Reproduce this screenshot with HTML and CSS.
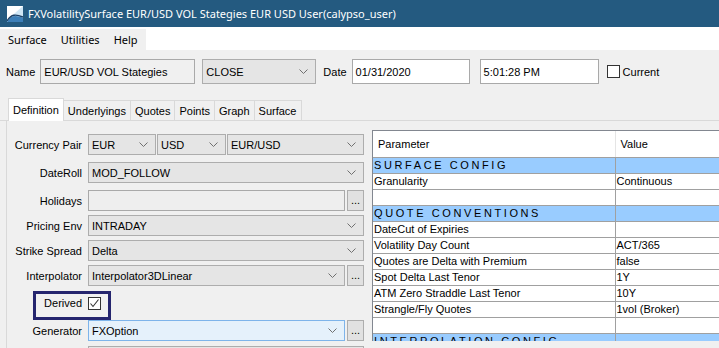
FILE: index.html
```html
<!DOCTYPE html>
<html>
<head>
<meta charset="utf-8">
<link rel="stylesheet" href="styles.css">
</head>
<body>
<div class="window">
  <div class="titlebar">
    <svg class="appicon" width="16" height="16" viewBox="0 0 16 16">
      <rect x="0" y="0" width="16" height="16" fill="#cfe6f5"/>
      <polygon points="0,0 16,0 0,14" fill="#ffffff"/>
      <path d="M0 16 C4 9 9 9 16 12 L16 16 Z" fill="#3d7fb8"/>
      <path d="M0 15 C4 8 9 8 16 11" stroke="#1b3f66" stroke-width="1.4" fill="none"/>
    </svg>
    <span class="title">FXVolatilitySurface EUR/USD VOL Stategies EUR USD User(calypso_user)</span>
  </div>
  <div class="menubar">
    <div class="menu">
      <span class="menuitem">Surface</span>
      <span class="menuitem">Utilities</span>
      <span class="menuitem">Help</span>
    </div>
  </div>
  <div class="content">
    <div class="namerow">
      <span class="lbl">Name</span>
      <div class="field disabled w-name">EUR/USD VOL Stategies</div>
      <div class="combo w-close"><span>CLOSE</span><svg class="chev" width="9" height="5" viewBox="0 0 9 5"><path d="M0.5 0.5 L4.5 4.5 L8.5 0.5" stroke="#707070" fill="none"/></svg></div>
      <span class="lbl">Date</span>
      <div class="field w-date">01/31/2020</div>
      <div class="field w-time">5:01:28 PM</div>
      <span class="checkbox"></span>
      <span class="lbl current">Current</span>
    </div>
    <div class="tabs">
      <span class="tab selected">Definition</span>
      <span class="tab">Underlyings</span>
      <span class="tab">Quotes</span>
      <span class="tab">Points</span>
      <span class="tab">Graph</span>
      <span class="tab">Surface</span>
    </div>
    <div class="panel">
      <div class="form">
        <div class="row wide">
          <span class="flabel">Currency Pair</span>
          <div class="fields">
            <div class="combo w-eur"><span>EUR</span><svg class="chev" width="9" height="5" viewBox="0 0 9 5"><path d="M0.5 0.5 L4.5 4.5 L8.5 0.5" stroke="#707070" fill="none"/></svg></div>
            <div class="combo w-usd"><span>USD</span><svg class="chev" width="9" height="5" viewBox="0 0 9 5"><path d="M0.5 0.5 L4.5 4.5 L8.5 0.5" stroke="#707070" fill="none"/></svg></div>
            <div class="combo grow"><span>EUR/USD</span><svg class="chev" width="9" height="5" viewBox="0 0 9 5"><path d="M0.5 0.5 L4.5 4.5 L8.5 0.5" stroke="#707070" fill="none"/></svg></div>
          </div>
        </div>
        <div class="row wide">
          <span class="flabel">DateRoll</span>
          <div class="fields">
            <div class="combo grow"><span>MOD_FOLLOW</span><svg class="chev" width="9" height="5" viewBox="0 0 9 5"><path d="M0.5 0.5 L4.5 4.5 L8.5 0.5" stroke="#707070" fill="none"/></svg></div>
          </div>
        </div>
        <div class="row">
          <span class="flabel">Holidays</span>
          <div class="fields">
            <div class="field grey grow"></div>
            <span class="dots">...</span>
          </div>
        </div>
        <div class="row">
          <span class="flabel">Pricing Env</span>
          <div class="fields">
            <div class="combo grow"><span>INTRADAY</span><svg class="chev" width="9" height="5" viewBox="0 0 9 5"><path d="M0.5 0.5 L4.5 4.5 L8.5 0.5" stroke="#707070" fill="none"/></svg></div>
          </div>
        </div>
        <div class="row">
          <span class="flabel">Strike Spread</span>
          <div class="fields">
            <div class="combo grow"><span>Delta</span><svg class="chev" width="9" height="5" viewBox="0 0 9 5"><path d="M0.5 0.5 L4.5 4.5 L8.5 0.5" stroke="#707070" fill="none"/></svg></div>
          </div>
        </div>
        <div class="row">
          <span class="flabel">Interpolator</span>
          <div class="fields">
            <div class="combo grow"><span>Interpolator3DLinear</span><svg class="chev" width="9" height="5" viewBox="0 0 9 5"><path d="M0.5 0.5 L4.5 4.5 L8.5 0.5" stroke="#707070" fill="none"/></svg></div>
            <span class="dots">...</span>
          </div>
        </div>
        <div class="row derived">
          <span class="flabel">Derived</span>
          <div class="fields">
            <span class="checkbox checked"><svg width="11" height="11" viewBox="0 0 11 11"><path d="M1.5 5.5 L4 8.5 L9.5 1.5" stroke="#333" stroke-width="1.1" fill="none"/></svg></span>
          </div>
          <span class="highlight"></span>
        </div>
        <div class="row">
          <span class="flabel">Generator</span>
          <div class="fields">
            <div class="combo hover grow"><span>FXOption</span><svg class="chev" width="9" height="5" viewBox="0 0 9 5"><path d="M0.5 0.5 L4.5 4.5 L8.5 0.5" stroke="#707070" fill="none"/></svg></div>
            <span class="dots">...</span>
          </div>
        </div>
        <div class="row">
          <span class="flabel"></span>
          <div class="fields">
            <div class="combo grow"></div>
          </div>
        </div>
      </div>
      <div class="gridwrap">
        <table class="grid">
          <colgroup><col class="c1"><col class="c2"></colgroup>
          <thead>
            <tr><th>Parameter</th><th>Value</th></tr>
          </thead>
          <tbody>
            <tr class="sect"><td>SURFACE CONFIG</td><td></td></tr>
            <tr><td>Granularity</td><td>Continuous</td></tr>
            <tr><td></td><td></td></tr>
            <tr class="sect"><td>QUOTE CONVENTIONS</td><td></td></tr>
            <tr><td>DateCut of Expiries</td><td></td></tr>
            <tr><td>Volatility Day Count</td><td>ACT/365</td></tr>
            <tr><td>Quotes are Delta with Premium</td><td>false</td></tr>
            <tr><td>Spot Delta Last Tenor</td><td>1Y</td></tr>
            <tr><td>ATM Zero Straddle Last Tenor</td><td>10Y</td></tr>
            <tr><td>Strangle/Fly Quotes</td><td>1vol (Broker)</td></tr>
            <tr><td></td><td></td></tr>
            <tr class="sect"><td>INTERPOLATION CONFIG</td><td></td></tr>
            <tr><td></td><td></td></tr>
          </tbody>
        </table>
      </div>
    </div>
  </div>
</div>
</body>
</html>
```

FILE: styles.css
```css
* { box-sizing: border-box; }
html, body { margin: 0; padding: 0; }
body {
  width: 719px;
  height: 348px;
  overflow: hidden;
  background: #f0f0f0;
  font-family: "Liberation Sans", Arial, sans-serif;
  font-size: 11px;
  color: #000;
}
.window { width: 719px; height: 348px; overflow: hidden; }

.titlebar {
  height: 27px;
  background: #245a80;
  display: flex;
  align-items: center;
  padding-left: 7px;
}
.appicon { flex: none; margin-right: 5px; }
.title {
  color: #fff;
  font-family: "Noto Sans", "Open Sans", sans-serif;
  font-size: 11px;
  white-space: nowrap;
}

.menubar {
  height: 23px;
  background: #fff;
  padding-top: 2px;
}
.menu {
  display: inline-flex;
  align-items: center;
  height: 21px;
  width: 146px;
  background: #f0f0f0;
  padding-left: 8px;
  gap: 14px;
  font-family: "Noto Sans", "Open Sans", sans-serif;
  font-size: 11px;
}

.content { background: #f0f0f0; }

.namerow {
  display: flex;
  align-items: center;
  height: 25px;
  margin-top: 9px;
  padding-left: 6px;
}
.lbl { white-space: nowrap; }
.namerow .lbl { margin-right: 5px; }
.field {
  height: 25px;
  border: 1px solid #a9a9a9;
  background: #fff;
  display: flex;
  align-items: center;
  padding-left: 3px;
  white-space: nowrap;
}
.field.disabled { background: #f0f0f0; }
.field.grey { background: #eeeeee; }
.w-name { width: 155px; margin-right: 7px; }
.w-close { width: 114px; margin-right: 7px; height: 25px; }
.w-date { width: 118px; margin-right: 10px; }
.w-time { width: 119px; margin-right: 8px; }
.checkbox {
  width: 13px;
  height: 13px;
  border: 1px solid #333;
  background: #fff;
  display: inline-flex;
  align-items: center;
  justify-content: center;
  flex: none;
}
.namerow .current { margin-left: 3px; }

.combo {
  height: 100%;
  background: #e5e5e5;
  border: 1px solid #adadad;
  display: flex;
  align-items: center;
  justify-content: space-between;
  padding: 0 7px 0 3px;
  white-space: nowrap;
}
.combo.hover { background: #e5f1fb; border-color: #7eb4ea; }
.chev { flex: none; }

.tabs {
  display: flex;
  align-items: flex-end;
  height: 22px;
  margin-top: 15px;
  padding-left: 8px;
  border-bottom: 1px solid #d9d9d9;
}
.tab {
  height: 20px;
  padding: 0 4px;
  border: 1px solid #d9d9d9;
  border-bottom: none;
  margin-left: -1px;
  display: flex;
  align-items: center;
  background: #f0f0f0;
  white-space: nowrap;
}
.tab.selected {
  height: 23px;
  margin-bottom: -1px;
  background: #fff;
  margin-left: 0;
  padding: 0 4px;
}

.panel {
  display: flex;
  align-items: flex-start;
  height: 230px;
  margin-left: 6px;
  border-left: 1px solid #d9d9d9;
  background: #f0f0f0;
}
.form {
  width: 357px;
  padding-top: 13px;
  flex: none;
}
.row {
  display: flex;
  height: 21px;
  margin-bottom: 4px;
}
.row.wide { margin-bottom: 7px; }
.row.derived { height: 26px; position: relative; align-items: center; margin-bottom: 4px; }
.row:nth-last-child(2) { margin-bottom: 5px; }
.flabel {
  width: 75px;
  text-align: right;
  margin-right: 6px;
  flex: none;
  align-self: center;
  white-space: nowrap;
}
.fields {
  display: flex;
  flex: 1;
  gap: 1px;
  height: 100%;
  align-items: center;
}
.w-eur { width: 68px; flex: none; }
.w-usd { width: 69px; flex: none; }
.grow { flex: 1; height: 100%; }
.dots {
  width: 17px;
  height: 100%;
  margin-left: 1px;
  flex: none;
  border: 1px solid #adadad;
  background: #e1e1e1;
  display: flex;
  align-items: flex-end;
  justify-content: center;
  padding-bottom: 4px;
  font-size: 11px;
  line-height: 1;
}
.derived .checkbox { margin-left: 0; }
.highlight {
  position: absolute;
  left: 26px;
  top: 1px;
  width: 78px;
  height: 29px;
  border: 3px solid #25256e;
}

.gridwrap {
  flex: 1;
  margin-left: 8px;
  margin-top: 9px;
  margin-right: -12px;
  height: 211px;
  overflow: hidden;
  border-left: 1px solid #828790;
  border-top: 1px solid #828790;
  background: #fff;
}
.grid {
  border-collapse: collapse;
  table-layout: fixed;
  width: 100%;
}
.c1 { width: 242px; }
.grid th {
  height: 26px;
  text-align: left;
  font-weight: normal;
  padding: 0 0 0 5px;
  background: #fff;
  border-right: 1px solid #e5e5e5;
  border-bottom: 1px solid #a0a0a0;
}
.grid td {
  height: 16px;
  padding: 0 0 0 1px;
  border-right: 1px solid #a0a0a0;
  border-bottom: 1px solid #a0a0a0;
  white-space: nowrap;
  overflow: hidden;
  line-height: 15px;
}
.grid tr.sect td {
  background: #99ccff;
  letter-spacing: 2.6px;
}
```
